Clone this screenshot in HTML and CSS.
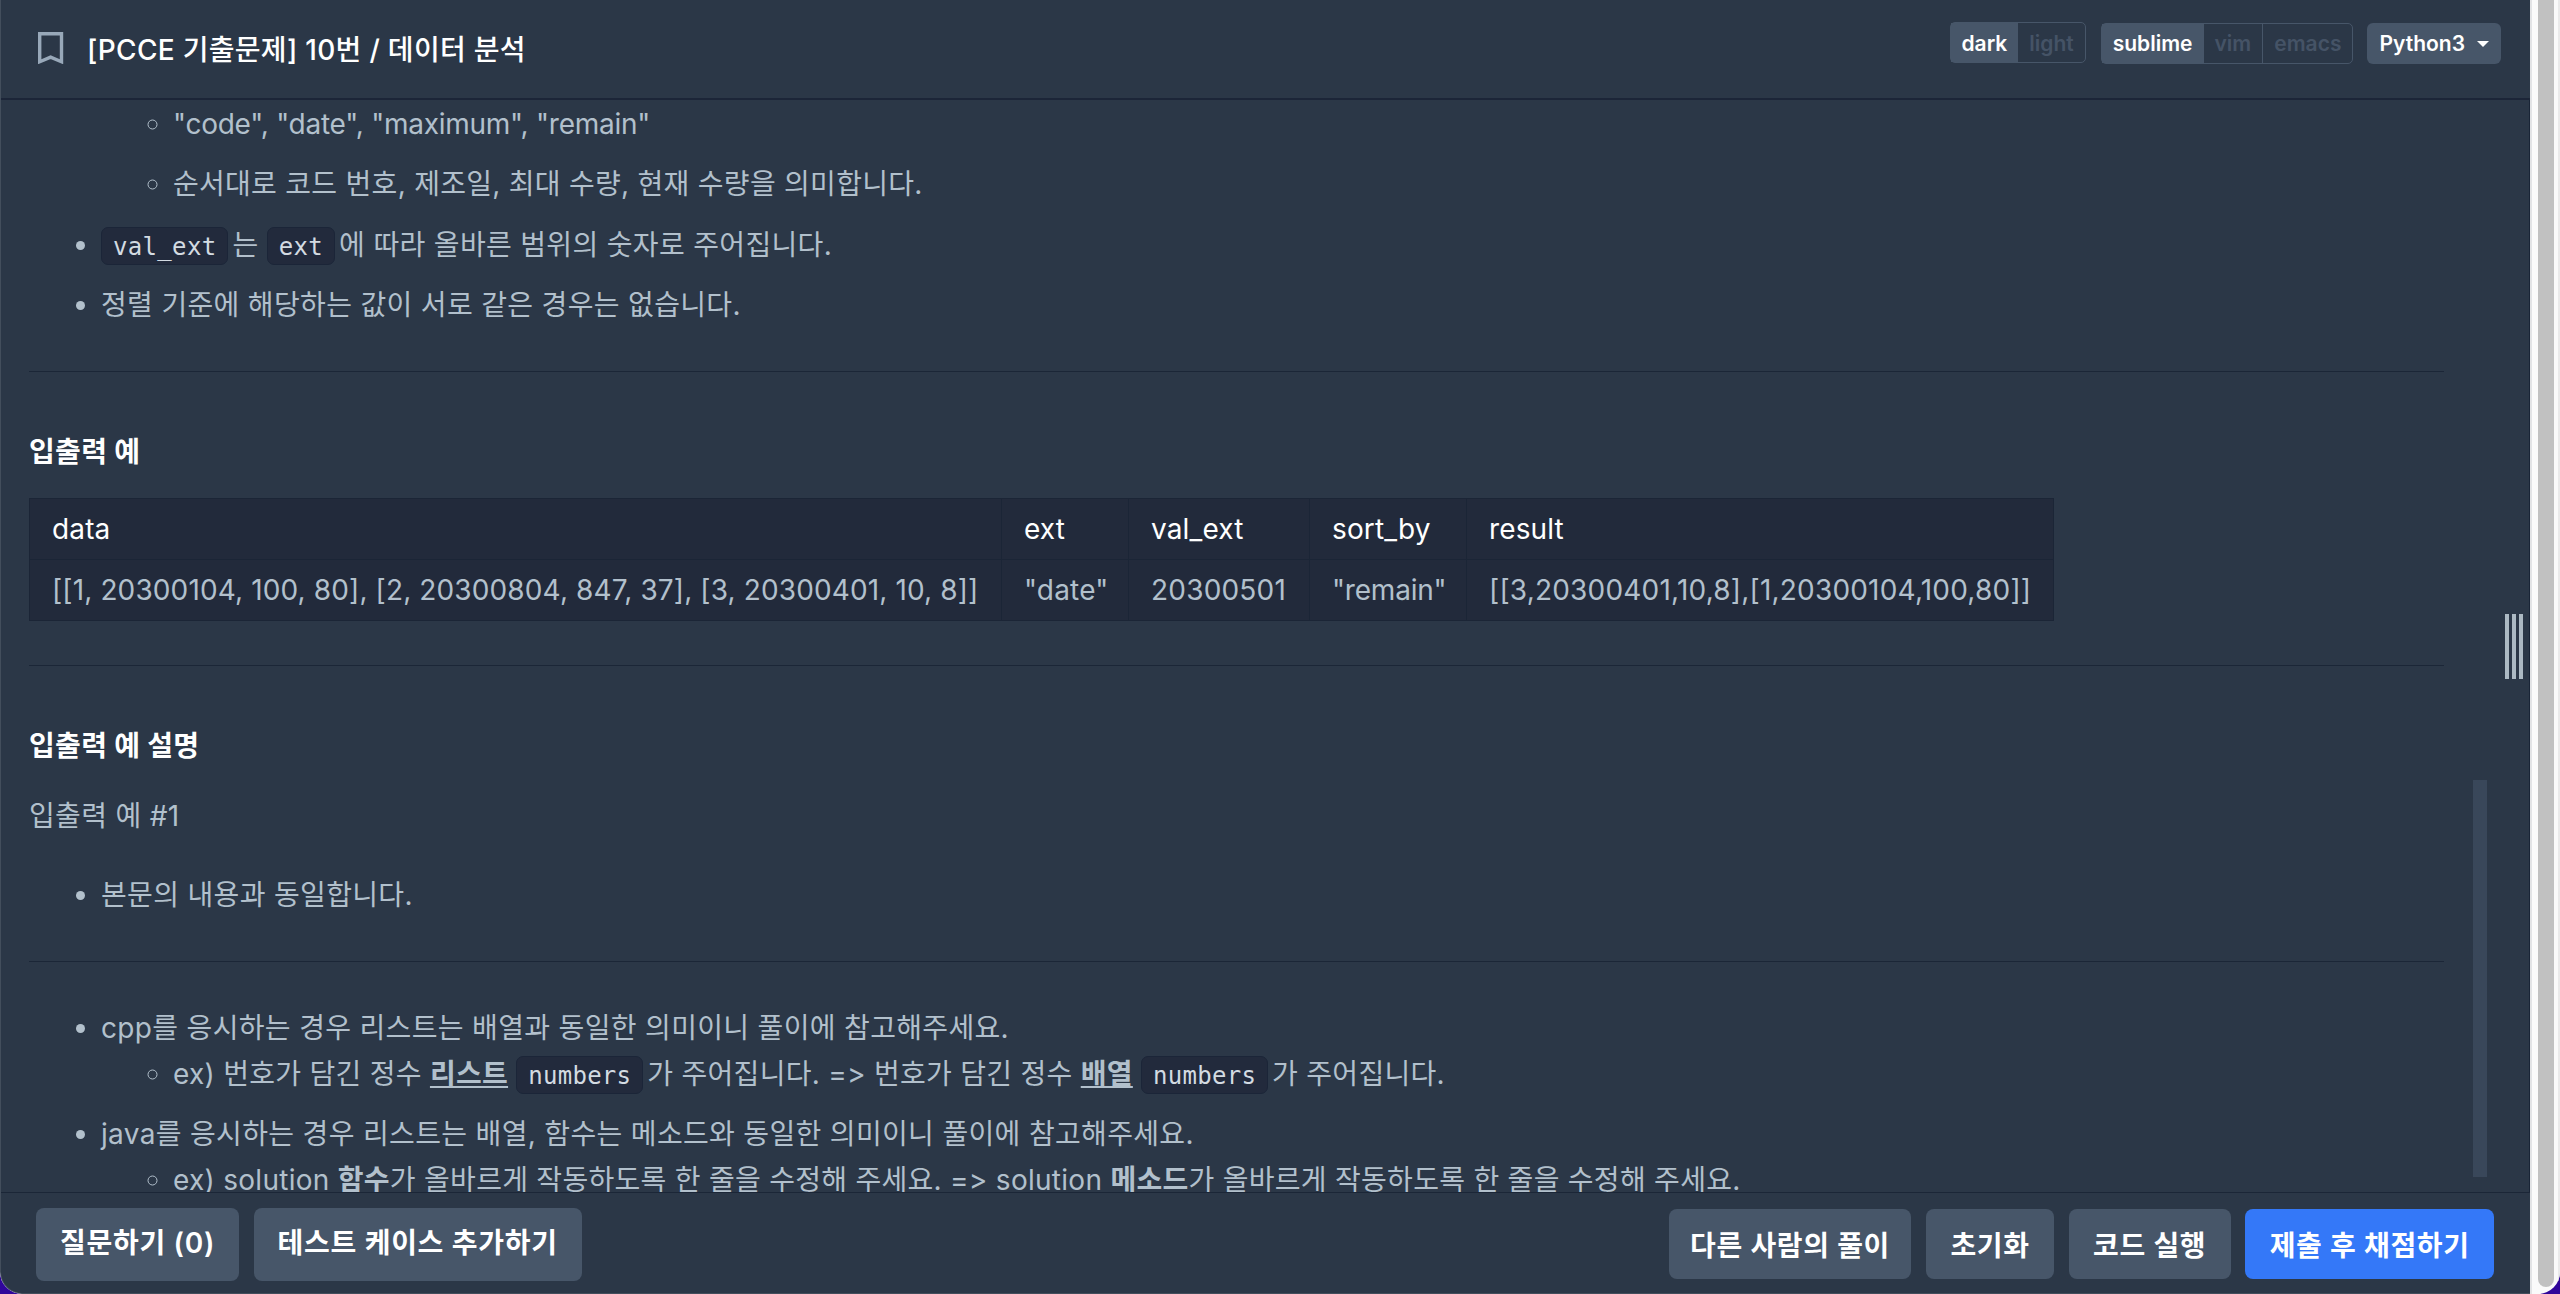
FILE: index.html
```
<!DOCTYPE html>
<html lang="ko">
<head>
    <meta charset="UTF-8">
    <meta name="viewport" content="width=device-width, initial-scale=1.0">
    <title>데이터 분석</title>
    <link rel="stylesheet" href="styles.css">
</head>
<body>
    <div class="window">
        <div class="app">
            <header class="navbar">
                <svg class="bookmark" viewBox="0 0 28 32">
                    <path d="M3.7 1.7h21.8v28l-10.9-4.6-10.9 4.6z" fill="none" stroke="#98a8b9" stroke-width="3.4"/>
                </svg>
                <h1 class="title">[PCCE 기출문제] 10번 / 데이터 분석</h1>
                <div class="settings">
                    <div class="toggle theme">
                        <span class="on">dark</span><span>light</span>
                    </div>
                    <div class="toggle keymap">
                        <span class="on">sublime</span><span>vim</span><span>emacs</span>
                    </div>
                    <button class="language">Python3<i class="caret"></i></button>
                </div>
            </header>
            <main class="main">
                <div class="guide">
                    <ul class="inner first">
                        <li class="keys">"code", "date", "maximum", "remain"</li>
                        <li>순서대로 코드 번호, 제조일, 최대 수량, 현재 수량을 의미합니다.</li>
                    </ul>
                    <ul class="list">
                        <li><code>val_ext</code>는 <code>ext</code>에 따라 올바른 범위의 숫자로 주어집니다.</li>
                        <li>정렬 기준에 해당하는 값이 서로 같은 경우는 없습니다.</li>
                    </ul>
                    <hr>
                    <h5>입출력 예</h5>
                    <table class="table">
                        <tr><th class="data">data</th><th class="ext">ext</th><th class="val">val_ext</th><th class="sort">sort_by</th><th>result</th></tr>
                        <tr>
                            <td>[[1, 20300104, 100, 80], [2, 20300804, 847, 37], [3, 20300401, 10, 8]]</td>
                            <td>"date"</td>
                            <td>20300501</td>
                            <td class="key">"remain"</td>
                            <td>[[3,20300401,10,8],[1,20300104,100,80]]</td>
                        </tr>
                    </table>
                    <hr>
                    <h5>입출력 예 설명</h5>
                    <p>입출력 예 #1</p>
                    <ul class="list">
                        <li>본문의 내용과 동일합니다.</li>
                    </ul>
                    <hr>
                    <ul class="list">
                        <li>cpp를 응시하는 경우 리스트는 배열과 동일한 의미이니 풀이에 참고해주세요.
                            <ul class="inner">
                                <li>ex) 번호가 담긴 정수 <u>리스트</u> <code>numbers</code>가 주어집니다. =&gt; 번호가 담긴 정수 <u>배열</u> <code>numbers</code>가 주어집니다.</li>
                            </ul>
                        </li>
                        <li>java를 응시하는 경우 리스트는 배열, 함수는 메소드와 동일한 의미이니 풀이에 참고해주세요.
                            <ul class="inner">
                                <li>ex) solution <b>함수</b>가 올바르게 작동하도록 한 줄을 수정해 주세요. =&gt; solution <b>메소드</b>가 올바르게 작동하도록 한 줄을 수정해 주세요.</li>
                            </ul>
                        </li>
                    </ul>
                </div>
                <div class="scroll"></div>
                <div class="gutter"><i></i><i></i><i></i></div>
            </main>
            <footer class="footer">
                <button class="btn tall">질문하기 (0)</button>
                <button class="btn tall">테스트 케이스 추가하기</button>
                <button class="btn answers">다른 사람의 풀이</button>
                <button class="btn">초기화</button>
                <button class="btn">코드 실행</button>
                <button class="btn primary">제출 후 채점하기</button>
            </footer>
        </div>
        <div class="page-scroll"><i></i></div>
    </div>
</body>
</html>
```
FILE: styles.css
```
* {
    box-sizing: border-box;
}
body {
    margin: 0;
    background-color: #30069a;
    font-family: Inter, "Noto Sans CJK KR", sans-serif;
    font-size: 28px;
    color: #b2c0cc;
}
h1, h5, p, ul, hr {
    margin: 0;
    padding: 0;
}
button {
    border: none;
    font-family: inherit;
    color: white;
}
.window {
    display: flex;
    height: 1294px;
    border-radius: 0 0 22px 22px;
    overflow: hidden;
    background-color: #fafafa;
}
.app {
    display: flex;
    flex-direction: column;
    width: 2530px;
    background-color: #2b3747;
    border-left: 1px solid #434e5c;
    border-bottom: 1px solid #434e5c;
    border-bottom-left-radius: 22px;
}
.navbar {
    display: flex;
    height: 100px;
    padding-left: 35px;
    padding-right: 29px;
    border-bottom: 2px solid #1c2538;
}
.bookmark {
    width: 28px;
    height: 32px;
    margin-top: 32px;
}
.title {
    margin-left: 23px;
    font-size: 28px;
    font-weight: 500;
    line-height: 100px;
    letter-spacing: 0.3px;
    color: white;
}
.settings {
    display: flex;
    margin-left: auto;
    margin-top: 22px;
    font-size: 21px;
    font-weight: 600;
}
.toggle {
    display: flex;
    height: 41px;
    line-height: 41px;
    border: 1px solid #475669;
    border-radius: 5px;
    color: #455366;
}
.toggle span {
    height: 39px;
    padding: 0 11px;
}
.toggle span + span + span {
    border-left: 1px solid #475669;
}
.toggle .on {
    background-color: #475669;
    color: white;
}
.keymap {
    line-height: 39px;
    margin: 1px 14px 0 15px;
}
.language {
    display: flex;
    align-items: center;
    height: 41px;
    margin-top: 1px;
    padding: 0 12px;
    background-color: #475669;
    border-radius: 6px;
    font-size: 21px;
    font-weight: 600;
}
.caret {
    margin-left: 12px;
    border: 6px solid transparent;
    border-top-color: white;
    border-bottom: none;
}
.main {
    display: flex;
    height: 1092px;
    overflow: hidden;
    border-right: 1px solid #192436;
}
.guide {
    width: 2415px;
    margin-left: 28px;
    line-height: 46px;
    letter-spacing: 0.33px;
    white-space: nowrap;
}
.list, .inner {
    padding-left: 72px;
}
.list {
    padding-top: 1px;
}
.list > li, .first li {
    margin-bottom: 14px;
}
.first {
    padding-left: 144px;
    padding-top: 1px;
}
.inner {
    list-style: circle;
    letter-spacing: 0.28px;
}
.keys {
    letter-spacing: -0.25px;
}
hr {
    height: 1px;
    border: none;
    background-color: #1b2637;
}
.list + hr {
    margin-top: 43px;
}
code {
    display: inline-block;
    height: 38px;
    padding: 0 11px;
    line-height: 38px;
    background-color: #222a3c;
    border: 1px solid #1b2538;
    border-radius: 7px;
    font-family: "DejaVu Sans Mono", monospace;
    font-size: 24px;
    color: #d3dbe2;
    vertical-align: middle;
    margin-right: 4px;
    margin-bottom: 2px;
}
h5 {
    margin-top: 57px;
    margin-bottom: 23px;
    font-size: 28px;
    font-weight: 700;
    color: white;
}
.table {
    width: 2025px;
    table-layout: fixed;
    border-collapse: collapse;
    background-color: #222a3b;
    line-height: 45px;
    letter-spacing: 0.13px;
}
.table th, .table td {
    height: 61px;
    padding: 0 22px;
    border: 1px solid #1b2536;
    text-align: left;
    font-weight: 400;
}
.table th {
    color: white;
}
.table td + td {
    letter-spacing: 0.2px;
}
.table td.key {
    letter-spacing: -0.2px;
}
.data {
    width: 972px;
}
.ext {
    width: 127px;
}
.val {
    width: 181px;
}
.sort {
    width: 157px;
}
.table + hr {
    margin-top: 44px;
}
p {
    margin-top: 24px;
    margin-bottom: 32px;
}
hr + .list {
    margin-top: 42px;
}
u, b {
    font-weight: 700;
}
.scroll {
    width: 14px;
    height: 397px;
    margin-top: 680px;
    margin-left: 29px;
    background-color: #39475a;
}
.gutter {
    display: flex;
    gap: 3px;
    margin: 514px 0 0 18px;
}
.gutter i {
    width: 4px;
    height: 65px;
    background-color: #acb9c3;
}
.footer {
    display: flex;
    height: 101px;
    padding: 15px 36px 0 35px;
    gap: 14.5px;
    border-top: 1px solid #1b2637;
}
.btn {
    height: 70px;
    margin-top: 1px;
    padding: 0 24.5px;
    background-color: #475669;
    border-radius: 8px;
    font-size: 28px;
    font-weight: 600;
    letter-spacing: 0.6px;
}
.tall {
    height: 73px;
    margin-top: 0;
    padding: 0 24px 8px;
    letter-spacing: 0.7px;
}
.answers {
    margin-left: auto;
    padding: 0 21.5px;
}
.primary {
    background-color: #3478f8;
}
.page-scroll {
    flex: 1;
    border-left: 2px solid #e2e3e5;
    border-right: 2px solid #eaeaea;
    padding-left: 6px;
}
.page-scroll i {
    display: block;
    width: 16px;
    height: 1287px;
    background-color: #c1c1c1;
    border-radius: 0 0 8px 8px;
}
```
